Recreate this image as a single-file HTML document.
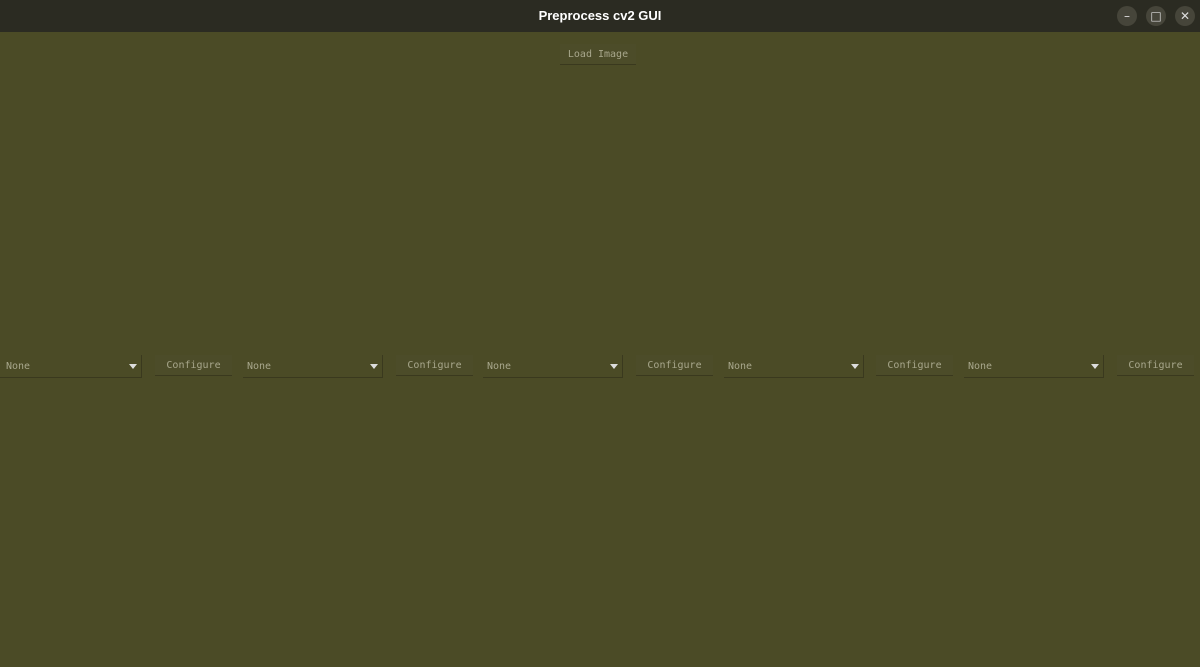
<!DOCTYPE html>
<html><head><style>
body{margin:0;width:1200px;height:667px;overflow:hidden;background:#4b4b26;font-family:"DejaVu Sans Mono","Liberation Mono",monospace;position:relative}
.tb{position:absolute;left:0;top:0;width:1200px;height:32px;background:#2b2b22;color:#fff;font:bold 13px "Liberation Sans",sans-serif;text-align:center;line-height:32px}
.wb{position:absolute;top:6px;width:20px;height:20px;border-radius:50%;background:#46453a;color:#ddd;font:12px "DejaVu Sans",sans-serif;text-align:center;line-height:20px}
.t{position:absolute;color:#a8a78c;font-size:10px;line-height:12px}
.cb{position:absolute;top:355px;height:22px;border-bottom:1px solid #3a391e}
.cb .ar{position:absolute;right:0;top:0;width:16px;height:22px;border-right:1px solid #3a391e}
.cb .ar:after{content:"";position:absolute;left:4px;top:9px;border-left:4px solid transparent;border-right:4px solid transparent;border-top:5px solid #ddd}
.btn{position:absolute;top:355px;width:77px;height:20px;border-bottom:1px solid #3a391e;background:#4c4c29;color:#a8a78c;font-size:10px;text-align:center;line-height:22px}
</style></head><body>
<div class="tb">Preprocess cv2 GUI</div>
<div class="wb" style="left:1117px">–</div>
<div class="wb" style="left:1146px">□</div>
<div class="wb" style="left:1175px">✕</div>
<div class="btn" style="left:560px;top:44px;width:76px">Load Image</div>

<div class="cb" style="left:0;width:142px"><span class="t" style="left:6px;top:6px">None</span><div class="ar"></div></div>
<div class="btn" style="left:155px">Configure</div>
<div class="cb" style="left:243px;width:140px"><span class="t" style="left:4px;top:6px">None</span><div class="ar"></div></div>
<div class="btn" style="left:396px">Configure</div>
<div class="cb" style="left:483px;width:140px"><span class="t" style="left:4px;top:6px">None</span><div class="ar"></div></div>
<div class="btn" style="left:636px">Configure</div>
<div class="cb" style="left:724px;width:140px"><span class="t" style="left:4px;top:6px">None</span><div class="ar"></div></div>
<div class="btn" style="left:876px">Configure</div>
<div class="cb" style="left:964px;width:140px"><span class="t" style="left:4px;top:6px">None</span><div class="ar"></div></div>
<div class="btn" style="left:1117px">Configure</div>
</body></html>
